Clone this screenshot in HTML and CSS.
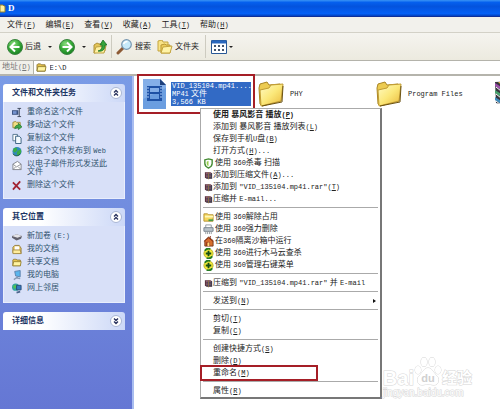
FILE: index.html
```html
<!DOCTYPE html>
<html lang="zh-CN">
<head>
  <meta charset="UTF-8" />
  <meta name="viewport" content="width=device-width, initial-scale=1.0" />
  <title>D</title>
  <link rel="stylesheet" href="styles.css">
</head>
<body>
  <!-- Shared icons -->
  <svg class="sprite" aria-hidden="true">
    <defs>
      <linearGradient id="gold" x1="0" y1="0" x2="1" y2="1">
        <stop offset="0" stop-color="#fffbc4" />
        <stop offset="0.5" stop-color="#fbe87a" />
        <stop offset="1" stop-color="#eab93a" />
      </linearGradient>
      <radialGradient id="green" cx="0.4" cy="0.3" r="0.8">
        <stop offset="0" stop-color="#8ddd80" />
        <stop offset="0.5" stop-color="#35a936" />
        <stop offset="1" stop-color="#12751e" />
      </radialGradient>
      <symbol id="folder" viewBox="0 0 26 26">
        <path d="M1 7l1-4 7-2 2 3 11-1 1 3v14L4 25 2 23z" fill="#eccb51" stroke="#a98524" />
        <path d="M2 9l9-2 2-3 12-1-2 17L3 25z" fill="url(#gold)" stroke="#c19c32" />
        <path d="M4 25l20-4 1-16" fill="none" stroke="#6c5312" />
      </symbol>
      <symbol id="folder-small" viewBox="0 0 12 10">
        <path d="M1 9V2l1-1h3l1 1h4v7z" fill="#e8c44c" stroke="#8a7430" />
        <path d="M1 9l1-5h9l-1 5z" fill="#fff3a0" stroke="#94802f" />
      </symbol>
      <symbol id="books" viewBox="0 0 10 9">
        <path d="M1 1h6l2 1v6H3L1 7z" fill="#4a2b36" />
        <path d="M2 2h6M2 4h6M2 6h6" stroke="#c9788b" />
        <path d="M3 3h6M3 5h6M3 7h6" stroke="#35495d" />
        <path d="M5 1v8" stroke="#8c6d46" />
      </symbol>
      <symbol id="plus-ball" viewBox="0 0 12 12">
        <circle cx="6" cy="6" r="5" fill="#f3ea3a" stroke="#b5ad25" />
        <path d="M2 3a5 5 0 0 1 6-2M10 9a5 5 0 0 1-6 2" stroke="#247c22" stroke-width="2" fill="none" />
        <path d="M6 3v6M3 6h6" stroke="#174d15" stroke-width="2" />
      </symbol>
      <symbol id="chevrons" viewBox="0 0 12 12">
        <circle cx="6" cy="6" r="5.5" fill="#fff" stroke="#a9b6d4" />
        <path d="M4 5.5l2-2 2 2M4 8.5l2-2 2 2" fill="none" stroke="#27305c" stroke-width="1.3" />
      </symbol>
    </defs>
  </svg>

  <header class="titlebar">
    <svg class="title-icon" viewBox="0 0 6 9"><path d="M0 1h3l1 1h1v6H0z" fill="#fff3a0" stroke="#94802f" /></svg>
    <h1>D</h1>
  </header>

  <nav class="menubar">
    <button>文件<span class="en">(<u>F</u>)</span></button>
    <button>编辑<span class="en">(<u>E</u>)</span></button>
    <button>查看<span class="en">(<u>V</u>)</span></button>
    <button>收藏<span class="en">(<u>A</u>)</span></button>
    <button>工具<span class="en">(<u>T</u>)</span></button>
    <button>帮助<span class="en">(<u>H</u>)</span></button>
  </nav>

  <div class="toolbar">
    <button class="tool">
      <svg width="16" height="16" viewBox="0 0 16 16"><circle cx="8" cy="8" r="7.5" fill="url(#green)" stroke="#3c8440" /><path d="M8 3.5L3.5 8 8 12.5M4 8h8.5" fill="none" stroke="#fff" stroke-width="2" /></svg>
      后退
    </button>
    <button class="drop" aria-label="后退列表"></button>
    <button class="tool" aria-label="前进">
      <svg width="16" height="16" viewBox="0 0 16 16"><circle cx="8" cy="8" r="7.5" fill="url(#green)" stroke="#3c8440" /><path d="M8 3.5L12.5 8 8 12.5M12 8H3.5" fill="none" stroke="#fff" stroke-width="2" /></svg>
    </button>
    <button class="drop" aria-label="前进列表"></button>
    <button class="tool" aria-label="向上">
      <svg width="14" height="16" viewBox="0 0 14 16"><path d="M1 14V6l3-2 2 1 6-1v8z" fill="#e5c558" stroke="#ae9138" /><path d="M1 14l2-6 10-1-2 7z" fill="#fff1a0" stroke="#bca043" /><path d="M5 12c4-1 4-4 4-6H7l3-5 4 5h-2c0 4-2 7-7 6z" fill="#36a43b" stroke="#187026" stroke-width="0.8" /></svg>
    </button>
    <button class="tool divided">
      <svg width="17" height="16" viewBox="0 0 17 16"><path d="M7 9l-5 5" stroke="#8d5a35" stroke-width="3" stroke-linecap="round" /><circle cx="10.5" cy="5.5" r="4.8" fill="#c7eafa" stroke="#7796af" stroke-width="1.2" /><path d="M7.5 5c1-2 2-2.5 4-2.5" fill="none" stroke="#fff" stroke-width="1.5" /></svg>
      搜索
    </button>
    <button class="tool folders">
      <svg width="16" height="14" viewBox="0 0 16 14"><path d="M1 11V1l4-1 1 2h5v9z" fill="#f8e386" stroke="#c4a53f" /><path d="M4 13V5l4-1 1 1h4v8z" fill="#edcd5a" stroke="#b99734" /><path d="M4 13l2-6 9-1-2 7z" fill="#fff3a6" stroke="#c4a53f" /></svg>
      文件夹
    </button>
    <button class="tool divided views" aria-label="查看方式">
      <svg width="16" height="14" viewBox="0 0 16 14"><path d="M.5.5h15v13H.5z" fill="#fff" stroke="#285896" /><path d="M1 2h14" stroke="#2a68be" stroke-width="3" /><path d="M3 6h2M7 6h2M11 6h2M3 10h2M7 10h2M11 10h2" stroke="#45556c" stroke-width="2" /></svg>
      <span class="drop"></span>
    </button>
  </div>

  <form class="address">
    <label for="path">地址<span class="en">(<u>D</u>)</span></label>
    <div class="address-box">
      <svg width="11" height="9" viewBox="0 0 12 10"><use href="#folder-small" /></svg>
      <input id="path" class="en" type="text" value="E:\D">
    </div>
  </form>

  <div class="explorer">
    <aside class="sidebar">
      <section class="panel">
        <h2>文件和文件夹任务
          <button aria-label="折叠"><svg width="12" height="12"><use href="#chevrons" /></svg></button>
        </h2>
        <ul>
          <li><svg viewBox="0 0 11 11"><path d="M0 3h7v5H0z" fill="#39517e" /><path d="M1 4h4v3H1z" fill="#7594d0" /><path d="M6 1h4M8 1v9M6 10h4" stroke="#384257" fill="none" /></svg><a href="#">重命名这个文件</a></li>
          <li><svg viewBox="0 0 11 11"><path d="M1 8V2l3-1 1 1h4v6z" fill="#f1df83" stroke="#9d893e" /><path d="M3 9c0-3 2-4 4-4V3l4 4-4 3V8C5 8 4 9 3 9z" fill="#41a84b" stroke="#176f29" stroke-width="0.7" /></svg><a href="#">移动这个文件</a></li>
          <li><svg viewBox="0 0 11 11"><path d="M1 1h5v7H1z" fill="#fff" stroke="#52738c" /><path d="M4 3h4l2 2v6H4z" fill="#f5fbff" stroke="#335b7c" /></svg><a href="#">复制这个文件</a></li>
          <li><svg viewBox="0 0 11 11"><circle cx="5.5" cy="5.5" r="5" fill="#3188bd" /><path d="M2 2l3-1 1 3-3 3-2-2zM6 5l4-2v4L7 10 5 8z" fill="#3aad46" /><path d="M1 8c2 3 6 3 8 0" stroke="#175325" fill="none" /></svg><a href="#">将这个文件发布到 <span class="en">Web</span></a></li>
          <li class="long"><svg viewBox="0 0 11 11"><path d="M1 4l5-3 4 3v6H1z" fill="#fff" stroke="#7f8188" /><path d="M1 4l4 3 5-3M1 10l3-3M10 10L7 7" fill="none" stroke="#898c93" /></svg><a href="#">以电子邮件形式发送此文件</a></li>
          <li><svg viewBox="0 0 11 11"><path d="M1 2l8 8M9 1L1 10" stroke="#a12333" stroke-width="2" /></svg><a href="#">删除这个文件</a></li>
        </ul>
      </section>

      <section class="panel">
        <h2>其它位置
          <button aria-label="折叠"><svg width="12" height="12"><use href="#chevrons" /></svg></button>
        </h2>
        <ul class="places">
          <li><svg viewBox="0 0 11 11"><path d="M0 5l5-2 6 2-1 3-5 2-5-3z" fill="#62616d" /><path d="M0 5l5-2 6 2-5 2z" fill="#e5e4e8" /></svg><a href="#">新加卷 <span class="en">(E:)</span></a></li>
          <li><svg viewBox="0 0 11 11"><path d="M1 9V3l2-2h5l2 3v6z" fill="#e7c55a" stroke="#947d3f" /><path d="M3 2h5v5H3z" fill="#fff" /><path d="M1 6h8l1 4H1z" fill="#ffed9d" stroke="#a68b43" /></svg><a href="#">我的文档</a></li>
          <li><svg viewBox="0 0 12 10"><use href="#folder-small" /></svg><a href="#">共享文档</a></li>
          <li><svg viewBox="0 0 11 11"><path d="M3 1l6-1v7L4 6z" fill="#59b5ed" stroke="#5b7faa" /><path d="M6 7v2M2 10l3-2 4 1" stroke="#8699b3" stroke-width="1.5" fill="none" /></svg><a href="#">我的电脑</a></li>
          <li><svg viewBox="0 0 11 11"><circle cx="4" cy="4" r="4" fill="#32a4a0" /><path d="M1 3l3-2 1 3-2 2z" fill="#4fc255" /><path d="M5 2h5v5H5z" fill="#337bc1" stroke="#294a77" /><path d="M5 10l4-1" stroke="#4d668e" stroke-width="2" /></svg><a href="#">网上邻居</a></li>
        </ul>
      </section>

      <section class="panel">
        <h2>详细信息
          <button class="expand" aria-label="展开"><svg width="12" height="12"><use href="#chevrons" /></svg></button>
        </h2>
      </section>
    </aside>

    <main class="files">
      <div class="tiles">
        <button class="file selected">
          <svg width="24" height="30" viewBox="0 0 24 30"><path d="M1 0h17l6 6v24H1z" fill="#6b9ee0" /><path d="M1 0h17l6 6v3L1 20z" fill="#94bbed" opacity="0.6" /><path d="M18 0v6h6z" fill="#1d3f7c" /><path d="M5 7h3v15H5zM17 7h3v15h-3z" fill="#1e51a5" /><path d="M8 8h9M8 14h9M8 21h9" stroke="#1e51a5" stroke-width="2" /><path d="M5 9h2M5 12h2M5 15h2M5 18h2M18 9h2M18 12h2M18 15h2M18 18h2" stroke="#a9cbf5" /></svg>
          <span class="caption"><span class="en">VID_135104.mp41....</span><span><span class="en">MP41</span> 文件</span><span class="en">3,566 KB</span></span>
        </button>
        <button class="file">
          <svg width="26" height="26"><use href="#folder" /></svg>
          <span class="caption en">PHY</span>
        </button>
        <button class="file">
          <svg width="26" height="26"><use href="#folder" /></svg>
          <span class="caption en">Program Files</span>
        </button>
        <button class="file" aria-label="RAR">
          <svg width="26" height="26" viewBox="0 0 26 26"><path d="M1 1l18-1 6 4v18l-5 4L2 22z" fill="#38363f" /><path d="M1 2l6 4h18v3H7L1 5z" fill="#9c4fa9" /><path d="M1 9l6 4h18v3H7l-6-4z" fill="#49a36d" /><path d="M1 16l6 4h18v3H7l-6-4z" fill="#408dbd" /><path d="M2 6l5 4h17M2 13l5 4h17M2 20l5 4h17" fill="none" stroke="#fff" /><path d="M4 1l6 5h4L8 1z" fill="#e5b83f" /></svg>
        </button>
      </div>

      <!-- Right-click menu -->
      <div class="context-menu">
        <ul>
          <li><button class="default">使用 暴风影音 播放<span class="en">(<u>P</u>)</span></button></li>
          <li><button>添加到 暴风影音 播放列表<span class="en">(<u>L</u>)</span></button></li>
          <li><button>保存到手机<span class="en">U</span>盘<span class="en">(<u>B</u>)</span></button></li>
          <li><button>打开方式<span class="en">(<u>H</u>)...</span></button></li>
          <li><button class="wide"><svg viewBox="0 0 12 12"><path d="M2 2l4-1 4 1v4c0 3-2 4-4 5-2-1-4-2-4-5z" fill="#fff" stroke="#448b32" stroke-width="1.5" /><path d="M6 3v6C4 8 4 7 4 4z" fill="#98cf4d" /></svg>使用 <span class="en">360</span>杀毒 扫描</button></li>
          <li><button><svg viewBox="0 0 10 9"><use href="#books" /></svg>添加到压缩文件<span class="en">(<u>A</u>)...</span></button></li>
          <li><button><svg viewBox="0 0 10 9"><use href="#books" /></svg>添加到 <span class="en">"VID_135104.mp41.rar"(<u>T</u>)</span></button></li>
          <li><button><svg viewBox="0 0 10 9"><use href="#books" /></svg>压缩并 <span class="en">E-mail...</span></button></li>
        </ul>
        <ul>
          <li><button class="wide"><svg viewBox="0 0 12 12"><path d="M1 10V2h4l1 1h5v7z" fill="#f5d75d" stroke="#b69334" /><path d="M2 5h9" stroke="#fff8b8" stroke-width="2" /><path d="M6 9h5" stroke="#4a9a44" stroke-width="2" /></svg>使用 <span class="en">360</span>解除占用</button></li>
          <li><button class="wide"><svg viewBox="0 0 12 12"><path d="M3 1h6v4H3z" fill="#fff" stroke="#8c969d" /><path d="M1 4h10v4H1z" fill="#bac3ca" stroke="#77828c" /><path d="M3 8v3M5 8v3M7 8v3M9 8v3" stroke="#8e979d" /></svg>使用 <span class="en">360</span>强力删除</button></li>
          <li><button class="wide"><svg viewBox="0 0 12 12"><path d="M2 5l4-4 5 4v6H2z" fill="#d66e2d" stroke="#773919" /><path d="M1 6l5-4 5 4M4 11V7h3v4M8 2V0" stroke="#8d2e18" fill="none" /><path d="M5 7h2v4H5z" fill="#ffda7b" /></svg>在<span class="en">360</span>隔离沙箱中运行</button></li>
          <li><button class="wide"><svg viewBox="0 0 12 12"><use href="#plus-ball" /></svg>使用 <span class="en">360</span>进行木马云查杀</button></li>
          <li><button class="wide"><svg viewBox="0 0 12 12"><use href="#plus-ball" /></svg>使用 <span class="en">360</span>管理右键菜单</button></li>
        </ul>
        <ul>
          <li><button><svg viewBox="0 0 10 9"><use href="#books" /></svg>压缩到 <span class="en">"VID_135104.mp41.rar"</span> 并 <span class="en">E-mail</span></button></li>
        </ul>
        <ul>
          <li><button class="submenu">发送到<span class="en">(<u>N</u>)</span></button></li>
        </ul>
        <ul>
          <li><button>剪切<span class="en">(<u>T</u>)</span></button></li>
          <li><button>复制<span class="en">(<u>C</u>)</span></button></li>
        </ul>
        <ul>
          <li><button>创建快捷方式<span class="en">(<u>S</u>)</span></button></li>
          <li><button>删除<span class="en">(<u>D</u>)</span></button></li>
          <li><button class="marked">重命名<span class="en">(<u>M</u>)</span></button></li>
        </ul>
        <ul>
          <li><button>属性<span class="en">(<u>R</u>)</span></button></li>
        </ul>
      </div>

      <div class="watermark">
        <div class="brand">
          <span class="bai">Bai</span>
          <svg width="28" height="30" viewBox="0 0 28 30"><g fill="#fff" stroke="#d3d3d3"><ellipse cx="4" cy="13" rx="3" ry="4" /><ellipse cx="10" cy="5" rx="3" ry="4.5" /><ellipse cx="18" cy="5" rx="3" ry="4.5" /><ellipse cx="24" cy="13" rx="3" ry="4" /><path d="M14 11c4 0 5 4 8 7 4 3 3 10-2 10-3 0-4-1-6-1s-3 1-6 1c-5 0-6-7-2-10 3-3 4-7 8-7z" /></g><text x="14" y="25" text-anchor="middle">du</text></svg>
          <span class="jingyan">经验</span>
        </div>
        <div class="site">jingyan.baidu.com</div>
      </div>
    </main>
  </div>
</body>
</html>
```

FILE: styles.css
```css
* {
  margin: 0;
  padding: 0;
  box-sizing: border-box;
}

body {
  display: flex;
  flex-direction: column;
  min-height: 100vh;
  background: #fff;
  color: #222;
  font: 8px/12px "Liberation Sans", "Noto Sans CJK SC", sans-serif;
  white-space: nowrap;
}

button,
input {
  border: none;
  background: none;
  color: inherit;
  font: inherit;
  white-space: inherit;
}

ul {
  list-style: none;
}

svg {
  flex: none;
}

.sprite {
  position: absolute;
  width: 0;
  height: 0;
}

/* Latin text is half as wide as a Chinese character */
.en {
  font-family: "Liberation Mono", monospace;
  font-size: 7px;
}

/* Window bars */
.titlebar {
  display: flex;
  align-items: center;
  gap: 2px;
  height: 17px;
  background: linear-gradient(#3a94f5, #0560ee 15%, #0453dd 40%, #0561f6 85%, #0340bd);
  border-bottom: 1px solid #10309a;
  color: #fff;
}

.title-icon {
  width: 6px;
  height: 9px;
}

.titlebar h1 {
  font: bold 9px/16px "Liberation Serif", serif;
}

.menubar {
  display: flex;
  gap: 10px;
  height: 16px;
  padding: 0 7px;
  background: #f2f1ec;
  border-bottom: 1px solid #d3d1c7;
}

.toolbar {
  display: flex;
  align-items: center;
  height: 28px;
  padding: 0 7px;
  background: linear-gradient(#f5f4ef, #eceadf);
  border-bottom: 1px solid #b4b3ab;
}

.tool {
  display: flex;
  align-items: center;
  gap: 2px;
}

.drop {
  width: 18px;
  height: 16px;
}

.drop::before {
  content: "";
  display: block;
  width: 0;
  margin: 0 auto;
  border: 2px solid transparent;
  border-top-color: #222;
  border-bottom: none;
}

.divided {
  height: 23px;
  margin-left: 4px;
  padding-left: 4px;
  border-left: 1px solid #cdcbc0;
}

.folders {
  margin-left: 6px;
}

.views {
  margin-left: 6px;
  padding-left: 5px;
}

.views .drop {
  width: 4px;
  height: 2px;
}

.address {
  display: flex;
  height: 13px;
  background: #f1f0ea;
}

.address label {
  padding: 0 2px;
  color: #777;
}

.address-box {
  display: flex;
  flex: 1;
  align-items: center;
  gap: 3px;
  padding-left: 2px;
  background: #fff;
  border-left: 1px solid #b3b3a8;
}

.address input {
  flex: 1;
  outline: none;
}

.explorer {
  display: flex;
  flex: 1;
  border-top: 2px solid #b5b4ac;
}

/* Task panels */
.sidebar {
  flex: none;
  display: flex;
  flex-direction: column;
  gap: 9px;
  width: 134px;
  padding: 8px 7px 8px 3px;
  background: linear-gradient(#7a9be6, #6577d4);
  border-right: 2px solid #a9bdf0;
}

.panel h2 {
  display: flex;
  align-items: center;
  justify-content: space-between;
  height: 18px;
  padding: 0 3px 0 9px;
  background: linear-gradient(90deg, #fff 30%, #ccd8f7);
  border-radius: 3px 3px 0 0;
  color: #1c3564;
  font-size: 8px;
}

.panel h2 button {
  height: 12px;
}

.panel h2 svg {
  display: block;
}

.expand {
  transform: rotate(180deg);
}

.panel ul {
  display: flex;
  flex-direction: column;
  gap: 1px;
  padding: 4px 12px 7px 8px;
  background: #d8e0f8;
  border: 1px solid #e9eefc;
  border-top: none;
}

.panel .places {
  padding-bottom: 8px;
}

.panel li {
  display: flex;
  align-items: center;
  gap: 5px;
  color: #31546f;
}

.panel li svg {
  width: 10px;
  height: 11px;
}

.panel a {
  color: inherit;
  text-decoration: none;
}

.panel .long {
  align-items: flex-start;
  padding: 2px 0;
  line-height: 8px;
  white-space: normal;
}

/* File tiles */
.files {
  position: relative;
  flex: 1;
  min-width: 0;
}

.tiles {
  display: grid;
  grid-template-columns: repeat(4, 118px);
  margin-top: -2px;
  padding: 0 3px;
  overflow: hidden;
}

.file {
  display: flex;
  align-items: center;
  gap: 6px;
  height: 40px;
  padding-left: 3px;
  text-align: left;
}

.selected {
  gap: 5px;
  border: 2px solid #a51e26;
}

.selected .caption {
  display: flex;
  flex-direction: column;
  width: 80px;
  padding-left: 1px;
  background: #326ac5;
  color: #fff;
  line-height: 8px;
}

/* Context menu */
.context-menu {
  position: absolute;
  top: 32px;
  left: 66px;
  width: 182px;
  background: #fff;
  border: 1px solid #aaa;
  border-right: 2px solid #777;
  border-bottom: 2px solid #777;
}

.context-menu ul + ul::before {
  content: "";
  display: block;
  height: 1px;
  margin: 2px 2px 3px;
  background: #aaa;
}

.context-menu button {
  position: relative;
  display: flex;
  align-items: center;
  width: 100%;
  height: 12px;
  padding-left: 12px;
  white-space: pre;
}

.context-menu svg {
  width: 9px;
  height: 9px;
  margin-left: -9px;
}

.context-menu .wide svg {
  width: 11px;
  height: 11px;
  margin: 0 1px 0 -10px;
}

.context-menu .default {
  font-weight: bold;
}

.submenu::after {
  content: "";
  margin: 0 4px 0 auto;
  border: 2px solid transparent;
  border-left: 3px solid #111;
  border-right: none;
}

.marked::after {
  content: "";
  position: absolute;
  inset: -2px 62px -2px -1px;
  border: 2px solid #a51e26;
}

/* Watermark */
.watermark {
  position: absolute;
  right: 28px;
  bottom: 10px;
  color: #fff;
  -webkit-text-stroke: 1px #d6d6d6;
  paint-order: stroke fill;
}

.brand {
  display: flex;
  align-items: flex-end;
}

.bai {
  font-size: 20px;
  font-weight: bold;
  line-height: 18px;
}

.brand text {
  fill: #d0d0d0;
  font-size: 11px;
  font-weight: bold;
  -webkit-text-stroke: 0;
}

.jingyan {
  font-size: 15px;
  font-weight: bold;
  line-height: 18px;
}

.site {
  font-size: 10px;
}
```
